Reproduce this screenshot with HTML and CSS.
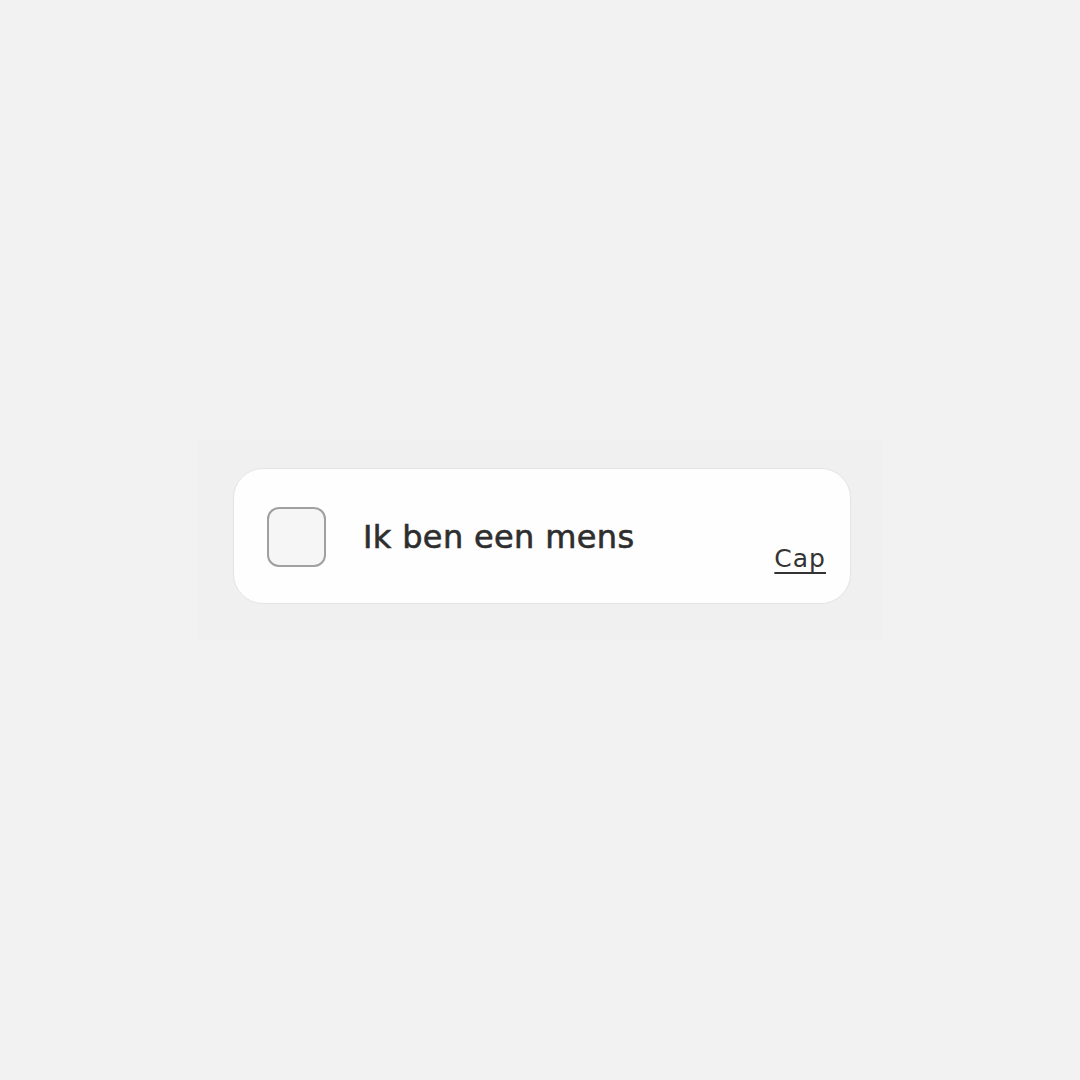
FILE: index.html
```html
<!DOCTYPE html>
<html lang="nl">
<head>
<meta charset="utf-8">
<link rel="stylesheet" href="styles.css">
</head>
<body>
<main class="stage">
  <div class="frame">
    <div class="card">
      <span class="box" role="checkbox" aria-checked="false"></span>
      <span class="label">Ik ben een mens</span>
      <a class="cap" href="#">Cap</a>
    </div>
  </div>
</main>
</body>
</html>
```
FILE: styles.css
```css
html, body {
  margin: 0;
  padding: 0;
  background: #f2f2f2;
}
.stage {
  width: 1080px;
  height: 1080px;
  display: flex;
  flex-direction: column;
  align-items: flex-start;
  padding: 440px 0 0 198px;
  box-sizing: border-box;
}
.frame {
  width: 684px;
  height: 200px;
  background: #f0f0f0;
  padding: 28px 0 0 35px;
  box-sizing: border-box;
}
.card {
  width: 618px;
  height: 136px;
  box-sizing: border-box;
  background: #fefefe;
  border: 1px solid #e4e4e4;
  border-radius: 30px;
  display: flex;
  align-items: flex-start;
  padding: 38px 24px 0 33px;
  font-family: "DejaVu Sans", sans-serif;
  color: #333;
}
.box {
  width: 59px;
  height: 60px;
  box-sizing: border-box;
  border: 2px solid #a0a0a0;
  border-radius: 12px;
  background: #f6f6f6;
  flex: none;
}
.label {
  margin-left: 37px;
  font-size: 32px;
  line-height: 36px;
  margin-top: 12px;
  letter-spacing: 0.35px;
  color: #2e2e2e;
  -webkit-text-stroke: 0.6px #2e2e2e;
}
.cap {
  margin-left: auto;
  margin-top: 38px;
  font-size: 25px;
  line-height: 28px;
  letter-spacing: 1px;
  color: #333;
  text-decoration: underline;
  text-underline-offset: 5px;
  text-decoration-thickness: 2px;
  text-decoration-skip-ink: auto;
}
```
